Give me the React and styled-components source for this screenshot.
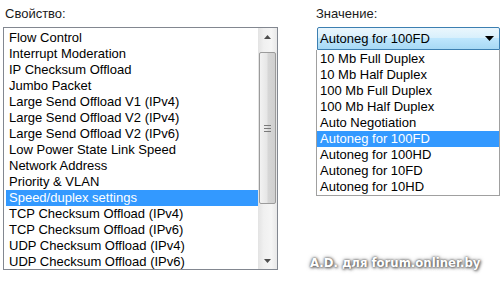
import React from "react";
import styled, { createGlobalStyle } from "styled-components";

const properties = [
  "Flow Control",
  "Interrupt Moderation",
  "IP Checksum Offload",
  "Jumbo Packet",
  "Large Send Offload V1 (IPv4)",
  "Large Send Offload V2 (IPv4)",
  "Large Send Offload V2 (IPv6)",
  "Low Power State Link Speed",
  "Network Address",
  "Priority & VLAN",
  "Speed/duplex settings",
  "TCP Checksum Offload (IPv4)",
  "TCP Checksum Offload (IPv6)",
  "UDP Checksum Offload (IPv4)",
  "UDP Checksum Offload (IPv6)",
];

const values = [
  "10 Mb Full Duplex",
  "10 Mb Half Duplex",
  "100 Mb Full Duplex",
  "100 Mb Half Duplex",
  "Auto Negotiation",
  "Autoneg for 100FD",
  "Autoneg for 100HD",
  "Autoneg for 10FD",
  "Autoneg for 10HD",
];

const Global = createGlobalStyle`
  body {
    margin: 0;
    background: #fff;
    font-family: "Liberation Sans", Arial, sans-serif;
  }
`;

const App = () => {
  return (
    <Root>
      <Global />
      <LeftColumn>
        <Label indent={2}>Свойство:</Label>
        <ListBox>
          <Items>
            {properties.map((p) => (
              <Item key={p} selected={p === "Speed/duplex settings"}>
                {p}
              </Item>
            ))}
          </Items>
          <ScrollBar>
            <Arrow>
              <svg width="7" height="4" viewBox="0 0 7 4">
                <path d="M0 4 L3.5 0 L7 4 Z" fill="#4d4d4d" />
              </svg>
            </Arrow>
            <Track>
              <Thumb>
                <Grip>
                  <span />
                  <span />
                  <span />
                </Grip>
              </Thumb>
            </Track>
            <Arrow>
              <svg width="7" height="4" viewBox="0 0 7 4">
                <path d="M0 0 L7 0 L3.5 4 Z" fill="#4d4d4d" />
              </svg>
            </Arrow>
          </ScrollBar>
        </ListBox>
      </LeftColumn>
      <RightColumn>
        <Label indent={0}>Значение:</Label>
        <Combo>
          <ComboText>Autoneg for 100FD</ComboText>
          <svg width="9" height="5" viewBox="0 0 9 5">
            <path d="M0 0 L9 0 L4.5 5 Z" fill="#000" />
          </svg>
        </Combo>
        <DropList>
          {values.map((v) => (
            <DropItem key={v} selected={v === "Autoneg for 100FD"}>
              {v}
            </DropItem>
          ))}
        </DropList>
        <Watermark>A.D. для forum.onliner.by</Watermark>
      </RightColumn>
    </Root>
  );
};

const Root = styled.div`
  display: flex;
  width: 502px;
  height: 287px;
  padding-top: 6px;
  box-sizing: border-box;
  font-size: 13px;
  color: #000;
  overflow: hidden;
`;

const LeftColumn = styled.div`
  display: flex;
  flex-direction: column;
  margin-left: 3px;
  width: 275px;
`;

const RightColumn = styled.div`
  display: flex;
  flex-direction: column;
  margin-left: 38px;
  width: 184px;
`;

const Label = styled.div`
  height: 16px;
  line-height: 16px;
  padding-left: ${(p) => p.indent}px;
  margin-bottom: 5px;
  color: #1a1a1a;
`;

const ListBox = styled.div`
  display: flex;
  height: 243px;
  border: 1px solid #828790;
  box-sizing: border-box;
  background: #fff;
`;

const Items = styled.div`
  flex: 1;
  padding: 2px 0 0 2px;
`;

const Item = styled.div`
  height: 16px;
  line-height: 16px;
  padding-left: 3px;
  white-space: nowrap;
  background: ${(p) => (p.selected ? "#3399ff" : "transparent")};
  color: ${(p) => (p.selected ? "#fff" : "#000")};
`;

const ScrollBar = styled.div`
  display: flex;
  flex-direction: column;
  width: 19px;
  background: linear-gradient(to right, #e3e3e3, #f0f0f0 30%, #f5f5f5 70%, #e8e8e8);
`;

const Arrow = styled.div`
  height: 17px;
  display: flex;
  align-items: center;
  justify-content: center;
`;

const Track = styled.div`
  flex: 1;
  padding-top: 7px;
`;

const Thumb = styled.div`
  height: 152px;
  margin: 0 1px;
  border: 1px solid #9b9b9b;
  border-radius: 2px;
  box-sizing: border-box;
  background: linear-gradient(to right, #f2f2f2, #e6e6e6 45%, #d6d6d6 55%, #cfcfcf);
  display: flex;
  align-items: center;
  justify-content: center;
`;

const Grip = styled.div`
  display: flex;
  flex-direction: column;
  gap: 2px;
  span {
    display: block;
    width: 7px;
    height: 1px;
    background: #7a7a7a;
  }
`;

const Combo = styled.div`
  display: flex;
  align-items: center;
  justify-content: space-between;
  height: 23px;
  margin-left: 1px;
  padding: 0 5px 0 2px;
  border: 1px solid #3c7fb1;
  border-radius: 2px 2px 0 0;
  box-sizing: border-box;
  background: linear-gradient(to bottom, #eaf6fd 0%, #d9f0fc 45%, #bee6fd 50%, #a7d9f5 100%);
`;

const ComboText = styled.span`
  line-height: 16px;
`;

const DropList = styled.div`
  height: 146px;
  padding-top: 1px;
  border: 1px solid #a0a0a0;
  border-top: none;
  box-sizing: border-box;
  background: #fff;
`;

const DropItem = styled.div`
  height: 16px;
  line-height: 16px;
  padding-left: 3px;
  white-space: nowrap;
  background: ${(p) => (p.selected ? "#3399ff" : "transparent")};
  color: ${(p) => (p.selected ? "#fff" : "#000")};
`;

const Watermark = styled.div`
  margin-top: 60px;
  margin-left: -6px;
  font-family: "DejaVu Sans", Verdana, sans-serif;
  font-weight: bold;
  font-size: 11.7px;
  line-height: 14px;
  color: #fff;
  white-space: nowrap;
  text-shadow: 0 0 2px #555, 0 0 4px #777, 1px 1px 3px #666;
`;

export default App;
